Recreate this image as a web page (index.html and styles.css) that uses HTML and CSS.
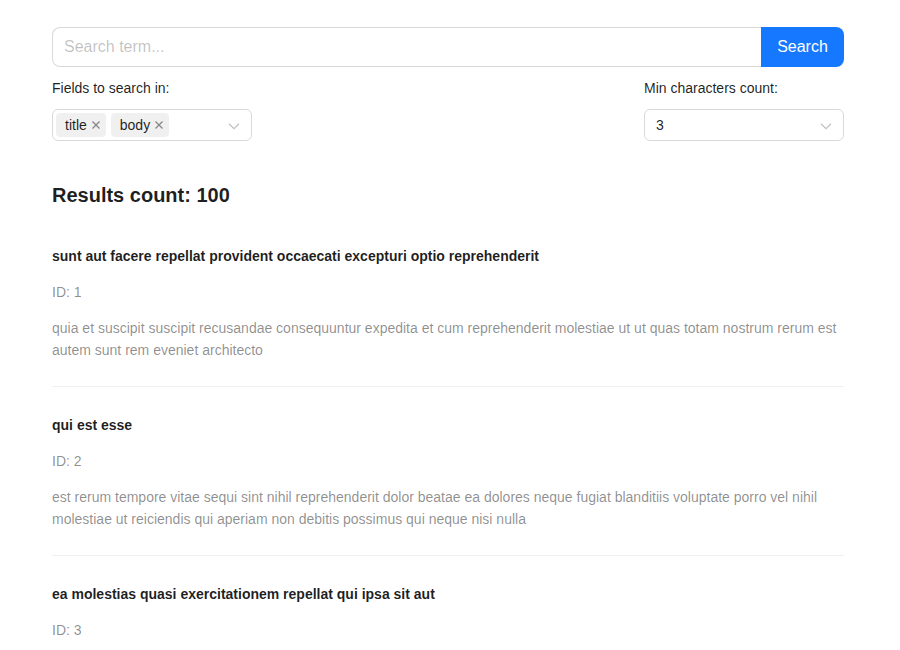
FILE: index.html
```html
<!DOCTYPE html>
<html>
<head>
<meta charset="utf-8">
<link rel="stylesheet" href="styles.css">
</head>
<body>
<div class="page">
  <div class="search">
    <input class="search-input" type="text" placeholder="Search term...">
    <button class="search-btn">Search</button>
  </div>
  <div class="filters">
    <div class="field">
      <div class="label">Fields to search in:</div>
      <div class="select multi">
        <span class="tag">title<svg class="x" viewBox="0 0 10 10"><path d="M1.5 1.5L8.5 8.5M8.5 1.5L1.5 8.5"/></svg></span>
        <span class="tag">body<svg class="x" viewBox="0 0 10 10"><path d="M1.5 1.5L8.5 8.5M8.5 1.5L1.5 8.5"/></svg></span>
        <svg class="chev" viewBox="0 0 12 12"><path d="M1 3.8L6 8.6L11 3.8"/></svg>
      </div>
    </div>
    <div class="field">
      <div class="label">Min characters count:</div>
      <div class="select single">
        <span class="value">3</span>
        <svg class="chev" viewBox="0 0 12 12"><path d="M1 3.8L6 8.6L11 3.8"/></svg>
      </div>
    </div>
  </div>
  <h4 class="count">Results count: 100</h4>
  <ul class="list">
    <li class="item">
      <div class="title">sunt aut facere repellat provident occaecati excepturi optio reprehenderit</div>
      <div class="meta">ID: 1</div>
      <div class="meta">quia et suscipit suscipit recusandae consequuntur expedita et cum reprehenderit molestiae ut ut quas totam nostrum rerum est autem sunt rem eveniet architecto</div>
    </li>
    <li class="item">
      <div class="title">qui est esse</div>
      <div class="meta">ID: 2</div>
      <div class="meta">est rerum tempore vitae sequi sint nihil reprehenderit dolor beatae ea dolores neque fugiat blanditiis voluptate porro vel nihil molestiae ut reiciendis qui aperiam non debitis possimus qui neque nisi nulla</div>
    </li>
    <li class="item">
      <div class="title">ea molestias quasi exercitationem repellat qui ipsa sit aut</div>
      <div class="meta">ID: 3</div>
      <div class="meta">et iusto sed quo iure voluptatem occaecati omnis eligendi aut ad voluptatem doloribus vel accusantium quis pariatur molestiae porro eius odio et labore et velit aut</div>
    </li>
  </ul>
</div>
</body>
</html>
```
FILE: styles.css
```css
html, body {
  margin: 0;
  padding: 0;
  background: #fff;
  font-family: "Liberation Sans", Arial, sans-serif;
  color: rgba(0, 0, 0, 0.88);
  font-size: 14px;
  line-height: 22px;
}
.page {
  width: 792px;
  margin-left: 52px;
  padding-top: 27px;
}
.search {
  display: flex;
  height: 40px;
}
.search-input {
  flex: 1;
  box-sizing: border-box;
  height: 40px;
  border: 1px solid #d9d9d9;
  border-right: none;
  border-radius: 8px 0 0 8px;
  padding: 0 11px;
  font-family: inherit;
  font-size: 16px;
  outline: none;
  color: rgba(0, 0, 0, 0.88);
}
.search-input::placeholder {
  color: rgba(0, 0, 0, 0.25);
}
.search-btn {
  width: 83px;
  height: 40px;
  border: none;
  background: #1677ff;
  color: #fff;
  font-family: inherit;
  font-size: 16px;
  border-radius: 0 8px 8px 0;
  padding: 0;
}
.filters {
  display: flex;
  justify-content: space-between;
  margin-top: 10px;
}
.field {
  width: 200px;
}
.label {
  line-height: 22px;
  margin-bottom: 10px;
}
.select {
  position: relative;
  box-sizing: border-box;
  height: 32px;
  border: 1px solid #d9d9d9;
  border-radius: 6px;
  display: flex;
  align-items: center;
}
.select.multi {
  padding: 0 3px;
  gap: 5px;
}
.select.single {
  padding: 0 11px;
}
.tag {
  display: inline-flex;
  align-items: center;
  height: 24px;
  box-sizing: border-box;
  background: rgba(0, 0, 0, 0.06);
  border-radius: 4px;
  padding: 0 5px 0 9px;
  line-height: 22px;
  gap: 4px;
}
.x {
  width: 10px;
  height: 10px;
  stroke: rgba(0, 0, 0, 0.45);
  stroke-width: 1.2;
  fill: none;
}
.chev {
  position: absolute;
  right: 11px;
  top: 10px;
  width: 12px;
  height: 12px;
  stroke: rgba(0, 0, 0, 0.25);
  stroke-width: 1.2;
  fill: none;
}
.count {
  margin: 40px 0 0;
  font-size: 20px;
  font-weight: 700;
  line-height: 28px;
}
.list {
  list-style: none;
  margin: 9px 0 0;
  padding: 0;
}
.item {
  padding: 27px 0 25px;
  border-bottom: 1px solid #f0f0f0;
  display: flex;
  flex-direction: column;
  gap: 14px;
}
.title {
  font-weight: 700;
}
.meta {
  color: rgba(0, 0, 0, 0.45);
}
```
